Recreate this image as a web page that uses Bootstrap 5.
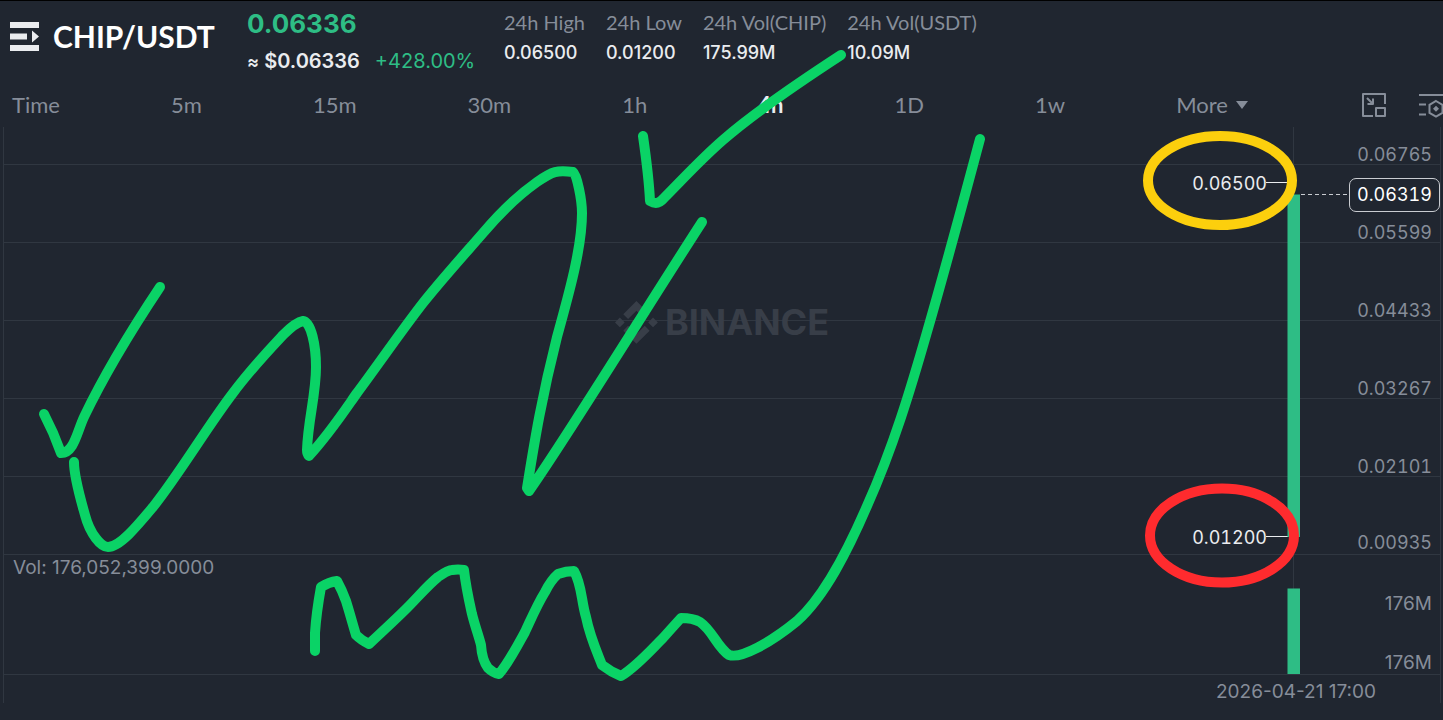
<!DOCTYPE html>
<html lang="en" data-bs-theme="dark">
<head>
<meta charset="utf-8">
<meta name="viewport" content="width=device-width, initial-scale=1">
<title>CHIP/USDT</title>
<link href="https://cdn.jsdelivr.net/npm/bootstrap@5.3.0/dist/css/bootstrap.min.css" rel="stylesheet">
<style>
  :root { --ink: #eaecef; --dim: #868d99; --line: #303741; --up: #2ebd85; --pen: #0ad366; }
  body { background: #202630; color: var(--ink); font-family: Inter, "Noto Sans", sans-serif; overflow-x: hidden; }
  .screen { border-top: 1px solid #000; }
  .words { font-family: Lato, "Noto Sans", sans-serif; }
  .dim { color: var(--dim); }
  .up { color: var(--up); }

  .ticker { padding: 8px 10px 0; height: 82px; }
  .menu-btn { line-height: 0; color: var(--ink); }
  .pair { width: 237px; padding-top: 7px; gap: 14px; }
  .pair h1 { font-size: 30px; line-height: 40px; font-weight: 700; }
  .price { width: 257px; }
  .last { font-size: 26px; line-height: 30px; font-weight: 700; }
  .fiat { font-size: 20px; line-height: 24px; margin-top: 10px; gap: 15px; }
  .fiat-value { font-weight: 600; }
  .approx { font-size: 18px; }
  .stats { gap: 21px; }
  .stats dt { font-size: 20px; line-height: 26px; font-weight: 400; }
  .stats dd { font-size: 18px; line-height: 36px; font-weight: 500; }

  .frames { padding-left: 12px; height: 44px; }
  .frames button { font-size: 22px; line-height: 36px; }
  .frames button.active { color: var(--ink); font-weight: 700; }
  .tools { width: 195px; padding-left: 113px; gap: 31px; }
  .tools button { line-height: 0; }

  .chart { margin: 0 2px 0 3px; border: solid var(--line); border-width: 0 1px; font-size: 19px; line-height: 18px; }
  .band { border-bottom: 1px solid var(--line); height: 78px; padding: 0 8px 0 9px; }
  .band-first { height: 38px; }
  .band-vol { height: 120px; }
  .band-date { height: 28px; padding: 8px 64px 0 0; }
  .band-end { padding-bottom: 2px; }
  .vol-axis { padding: 40px 0 2px; }
  .tick, .candle text, .tag { font-size: 18px; font-variant-numeric: tabular-nums; }
  .mark-word { font-size: 36px; line-height: 40px; font-weight: 700; }
  .watermark { height: 390px; color: #383e48; gap: 7px; }
  .candle { top: 0; right: -3px; }
  .candle text { fill: var(--ink); }
  .tag { top: 51px; right: 0; width: 91px; line-height: 32px; border: 1px solid #c9ccd1; border-radius: 7px; background: #202630; }
  .sketch { pointer-events: none; fill: none; stroke: var(--pen); stroke-width: 10; stroke-linecap: round; stroke-linejoin: round; }
</style>
<script src="https://cdn.jsdelivr.net/npm/bootstrap@5.3.0/dist/js/bootstrap.bundle.min.js"></script>
</head>
<body>
<main class="screen position-relative">
  <header class="ticker d-flex align-items-start text-nowrap">
    <div class="pair d-flex align-items-center flex-shrink-0">
      <button class="menu-btn btn p-0 border-0" type="button" aria-label="Markets">
        <svg width="29" height="29" viewBox="0 0 29 29" fill="currentColor"><path d="M0 0h29v6H0zM0 11.500h17v6H0zM0 23h29v6H0zM22 8.500l7 6-7 6z"/></svg>
      </button>
      <h1 class="words m-0">CHIP/USDT</h1>
    </div>
    <div class="price flex-shrink-0">
      <div class="last up">0.06336</div>
      <div class="fiat d-flex"><span class="fiat-value"><span class="approx">≈</span> $0.06336</span><span class="up">+428.00%</span></div>
    </div>
    <div class="stats d-flex">
      <dl class="m-0"><dt class="words dim">24h High</dt><dd class="m-0">0.06500</dd></dl>
      <dl class="m-0"><dt class="words dim">24h Low</dt><dd class="m-0">0.01200</dd></dl>
      <dl class="m-0"><dt class="words dim">24h Vol(CHIP)</dt><dd class="m-0">175.99M</dd></dl>
      <dl class="m-0"><dt class="words dim">24h Vol(USDT)</dt><dd class="m-0">10.09M</dd></dl>
    </div>
  </header>

  <nav class="frames d-flex align-items-center" aria-label="Interval">
    <div class="words d-flex justify-content-between flex-grow-1">
      <button class="btn p-0 border-0 dim" type="button">Time</button>
      <button class="btn p-0 border-0 dim" type="button">5m</button>
      <button class="btn p-0 border-0 dim" type="button">15m</button>
      <button class="btn p-0 border-0 dim" type="button">30m</button>
      <button class="btn p-0 border-0 dim" type="button">1h</button>
      <button class="btn p-0 border-0 active" type="button">4h</button>
      <button class="btn p-0 border-0 dim" type="button">1D</button>
      <button class="btn p-0 border-0 dim" type="button">1w</button>
      <button class="btn p-0 border-0 dim d-flex align-items-center gap-2" type="button">More
        <svg width="12" height="8" viewBox="0 0 12 8" fill="currentColor"><path d="M0 0h12L6 8z"/></svg>
      </button>
    </div>
    <div class="tools d-flex flex-shrink-0 overflow-hidden">
      <button class="btn p-0 border-0 dim" type="button" aria-label="Pop out">
        <svg width="26" height="26" viewBox="0 0 26 26" fill="none" stroke="currentColor" stroke-width="2" stroke-linejoin="round"><path d="M24 12V2H2v22h10M15 16h9v8h-9zM6 6l6 6M12 6.500V12H6.500"/></svg>
      </button>
      <button class="btn p-0 border-0 dim flex-shrink-0" type="button" aria-label="Chart settings">
        <svg width="30" height="26" viewBox="0 0 30 26" fill="none" stroke="currentColor" stroke-width="2"><path d="M1 3h29M1 12.500h7M1 22.500h7M18 9l6.500 3.800v8L18 24.500l-6.500-3.700v-8z"/><path d="M18 13.800l3 3-3 3-3-3z" fill="currentColor" stroke="none"/></svg>
      </button>
    </div>
  </nav>

  <section class="chart position-relative dim" aria-label="Price chart">
    <div class="watermark position-absolute top-0 start-0 end-0 d-flex align-items-center justify-content-center">
      <svg width="43" height="43" viewBox="0 0 127 127" fill="currentColor"><path d="M38.730 53.200 63.300 28.630 87.890 53.220 102.190 38.920 63.300 0 24.430 38.900zM0 63.310 14.300 49.010 28.600 63.310 14.300 77.610zM38.730 73.410 63.300 97.980 87.890 73.400 102.200 87.680 63.300 126.600 24.430 87.730zM98 63.310l14.300-14.300 14.300 14.300-14.300 14.300zM77.830 63.300 63.300 48.780 48.800 63.280 63.300 77.830z"/></svg>
      <span class="mark-word">BINANCE</span>
    </div>
    <div class="tick band band-first d-flex align-items-end justify-content-end">0.06765</div>
    <div class="tick band d-flex align-items-end justify-content-end">0.05599</div>
    <div class="tick band d-flex align-items-end justify-content-end">0.04433</div>
    <div class="tick band d-flex align-items-end justify-content-end">0.03267</div>
    <div class="tick band d-flex align-items-end justify-content-end">0.02101</div>
    <div class="tick band band-end d-flex align-items-end justify-content-end">0.00935</div>
    <div class="band band-vol d-flex justify-content-between">
      <span class="pt-1">Vol: 176,052,399.0000</span>
      <span class="vol-axis d-flex flex-column justify-content-between text-end"><span>176M</span><span>176M</span></span>
    </div>
    <div class="band-date text-end">2026-04-21 17:00</div>

    <svg class="candle position-absolute" width="313" height="576" viewBox="1130 127 313 576">
      <path d="M1293.500 127V674" stroke="#303741"/>
      <path d="M1266 182.500h28M1266 536.500h28" stroke="#eaecef"/>
      <path d="M1301 194.500h48" stroke="#c9ccd1" stroke-dasharray="4 3"/>
      <path d="M1287.500 194.500h12.500V537h-12.500zM1287.500 588.500h12.500V674h-12.500z" fill="#2ebd85"/>
      <text x="1267" y="190" text-anchor="end">0.06500</text>
      <text x="1267" y="544" text-anchor="end">0.01200</text>
    </svg>
    <div class="tag position-absolute text-center text-white">0.06319</div>
  </section>

  <!-- freehand notes drawn over the chart -->
  <svg class="sketch position-absolute top-0 start-0 w-100" viewBox="0 1 1443 719" aria-hidden="true">
    <path d="M44 414Q54 433 61 453C74 453 77 432 84 417C106 371 130 332 160 287"/>
    <path d="M74 462C74 478 82 504 85 515C90 534 101 547 108 547C120 547 138 525 153 507C180 473 207 427 233 393C250 370 268 351 283 335C290 328 297 322 303 321C311 322 316 345 316 367C316 395 308 420 307 450Q307 454 309 456C330 433 345 410 357 393C380 362 402 330 423 303C443 278 463 256 483 233C505 207 520 194 537 182C553 171 557 170 573 172C577 175 582 200 582 213C582 250 567 300 557 337C541 400 534 445 527 488L529 491C565 440 640 318 702 222"/>
    <path d="M643 136C645 150 649 180 650 201C655 204 659 204 664 198C683 179 700 160 723 140C755 112 795 85 841 55"/>
    <path d="M315 651V633C316 618 319 598 321 587Q329 582 337 581Q342 590 346 601C350 614 353 625 356 635Q361 640 369 644C383 631 398 617 407 608C418 597 428 585 438 577Q448 570 452 570Q458 569 464 570C466 588 470 605 472 614C475 626 479 637 481 645Q482 660 488 668Q493 673 499 674C508 664 520 641 525 632C532 617 537 605 545 592Q551 580 558 574Q566 571 574 571C582 585 581 600 586 617C590 637 597 652 602 665Q611 672 621 676C636 667 650 651 663 638Q671 629 681 618Q693 618 700 622C713 631 717 647 729 655C741 659 770 643 797 621C825 596 848 550 867 506C893 448 911 388 927 332C947 263 965 195 980 139"/>
    <ellipse cx="1220" cy="180.500" rx="72" ry="44.500" stroke="#fccf0d"/>
    <ellipse cx="1222" cy="535.500" rx="72" ry="47" stroke="#ff2b2e"/>
  </svg>
</main>
</body>
</html>
